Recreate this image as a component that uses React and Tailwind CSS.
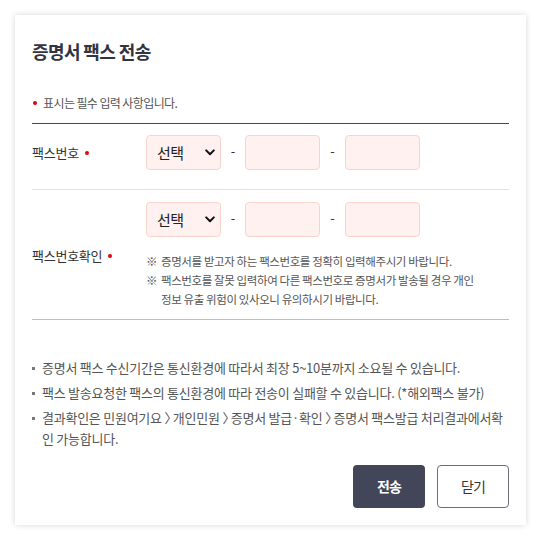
import React from "react";

const F = { fontFamily: '"Noto Sans CJK KR", "Noto Sans", sans-serif' };

function Dot() {
  return <span className="inline-block w-[4px] h-[4px] rounded-full bg-[#e8000b]" />;
}

function Chevron() {
  return (
    <svg width="10" height="7" viewBox="0 0 10 7" className="block">
      <path d="M1.2 1.4 L5 5.2 L8.8 1.4" fill="none" stroke="#111" strokeWidth="2" strokeLinecap="round" strokeLinejoin="round" />
    </svg>
  );
}

function PhoneInputs() {
  return (
    <div className="flex items-center">
      <div className="w-[75px] h-[35px] rounded-[4px] border border-[#fbd3cd] bg-[#fff1f0] flex items-center justify-between pl-[10px] pr-[5px]">
        <span className="text-[15px] text-[#222] tracking-[-0.5px] leading-none">선택</span>
        <Chevron />
      </div>
      <div className="w-[24px] text-center text-[13px] text-[#333] -mt-[4px]">-</div>
      <div className="w-[75px] h-[35px] rounded-[4px] border border-[#fbd3cd] bg-[#fff1f0]" />
      <div className="w-[25px] text-center text-[13px] text-[#333] -mt-[4px]">-</div>
      <div className="w-[75px] h-[35px] rounded-[4px] border border-[#fbd3cd] bg-[#fff1f0]" />
    </div>
  );
}

function Bullet({ children, className = "" }) {
  return (
    <li className="flex leading-[21px]">
      <span className="w-[10px] shrink-0 flex pt-[10px]">
        <span className="w-[3px] h-[3px] bg-[#777]" />
      </span>
      <span className={className}>{children}</span>
    </li>
  );
}

function Gt() {
  return <span className="mr-[-7px]">〉</span>;
}

export default function App() {
  return (
    <div className="w-[541px] h-[540px] bg-white pt-[15px] pl-[15px]" style={F}>
      <div className="w-[511px] h-[510px] bg-white shadow-[0_0_6px_rgba(0,0,0,0.16)] px-[17px] pt-[23px] flex flex-col">
        <h1 className="text-[18px] font-bold leading-[26px] text-[#33343f] tracking-[-0.6px]">증명서 팩스 전송</h1>

        <div className="mt-[30px] flex items-center pl-[1px] pb-[11px] border-b border-[#44465a]">
          <Dot />
          <span className="ml-[6px] text-[12px] text-[#555] tracking-[-0.6px] leading-[18px]">표시는 필수 입력 사항입니다.</span>
        </div>

        <div className="flex items-center pt-[11px] pb-[19px] border-b border-[#e2e2e2]">
          <div className="w-[114px] shrink-0 flex items-center text-[13px] text-[#333] tracking-[-0.25px]">
            팩스번호<span className="ml-[6px] flex"><Dot /></span>
          </div>
          <PhoneInputs />
        </div>

        <div className="flex items-center pt-[12px] pb-[10px] border-b border-[#bcbdc7]">
          <div className="w-[114px] shrink-0 flex items-center text-[13px] text-[#333] tracking-[-0.25px]">
            팩스번호확인<span className="ml-[6px] flex"><Dot /></span>
          </div>
          <div className="flex flex-col">
            <PhoneInputs />
            <div className="mt-[15px] w-[345px] text-[11.5px] leading-[19px] text-[#555] tracking-[-0.4px] break-keep">
              <div className="flex">
                <span className="w-[15px] shrink-0">※</span>
                <span>증명서를 받고자 하는 팩스번호를 정확히 입력해주시기 바랍니다.</span>
              </div>
              <div className="flex">
                <span className="w-[15px] shrink-0">※</span>
                <span>팩스번호를 잘못 입력하여 다른 팩스번호로 증명서가 발송될 경우 개인 정보 유출 위험이 있사오니 유의하시기 바랍니다.</span>
              </div>
            </div>
          </div>
        </div>

        <ul className="mt-[37px] flex flex-col gap-[4px] text-[13px] text-[#555] tracking-[-0.25px]">
          <Bullet>증명서 팩스 수신기간은 통신환경에 따라서 최장 5~10분까지 소요될 수 있습니다.</Bullet>
          <Bullet>팩스 발송요청한 팩스의 통신환경에 따라 전송이 실패할 수 있습니다. (*해외팩스 불가)</Bullet>
          <Bullet className="break-all">결과확인은 민원여기요 <Gt /> 개인민원 <Gt /> 증명서 발급·확인 <Gt /> 증명서 팩스발급 처리결과에서확인 가능합니다.</Bullet>
        </ul>

        <div className="mt-auto mb-[17px] flex justify-end gap-[12px]">
          <button className="w-[72px] h-[43px] rounded-[4px] bg-[#434559] text-white text-[14px] font-bold tracking-[-1px]">전송</button>
          <button className="w-[72px] h-[43px] rounded-[4px] border border-[#6c6e7c] bg-white text-[#333] text-[14px] tracking-[-1px]">닫기</button>
        </div>
      </div>
    </div>
  );
}
